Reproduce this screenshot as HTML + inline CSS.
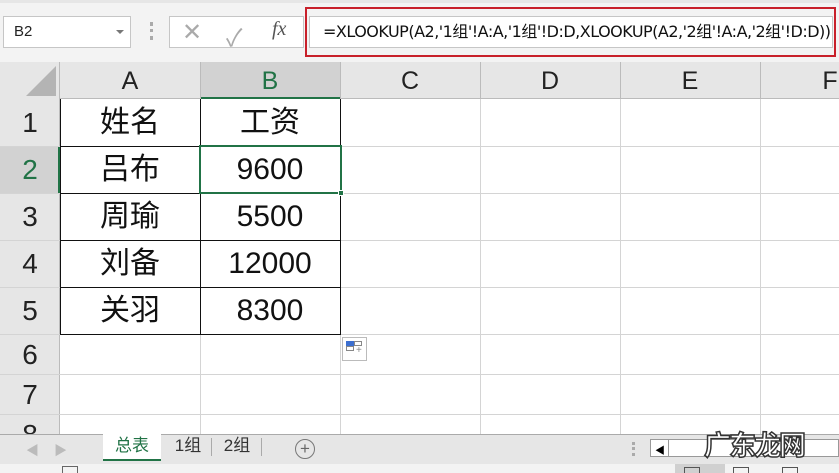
<!DOCTYPE html>
<html><head><meta charset="utf-8"><style>
*{margin:0;padding:0;box-sizing:border-box}
body{width:839px;height:473px;overflow:hidden;background:#fff;position:relative;font-family:"Liberation Sans","Noto Sans CJK SC",sans-serif}
.a{position:absolute}
.hl{position:absolute;height:1px;background:#d4d4d4}
.vl{position:absolute;width:1px;background:#d4d4d4}
.ch{position:absolute;top:62px;height:37px;font-size:25px;color:#222;text-align:center;line-height:38px}
.rh{position:absolute;left:0;width:60px;font-size:28px;color:#222;text-align:center}
.c{position:absolute;width:140px;text-align:center;font-size:30px;color:#111}
</style></head><body>
<!-- toolbar -->
<div class="a" style="left:0;top:0;width:839px;height:62px;background:#f3f3f3;border-top:3px solid #e6e6e6"></div>
<div class="a" style="left:3px;top:16px;width:128px;height:32px;background:#fff;border:1px solid #c6c6c6;font-size:15px;line-height:30px;padding-left:10px;color:#222">B2</div>
<div class="a" style="left:116px;top:30px;width:0;height:0;border-left:4px solid transparent;border-right:4px solid transparent;border-top:4px solid #777"></div>
<div class="a" style="left:150px;top:22px;width:3px;height:18px;border-left:3px dotted #aaa"></div>
<div class="a" style="left:169px;top:16px;width:135px;height:32px;background:#fff;border:1px solid #c6c6c6"></div>
<div class="a" style="left:182px;top:18px;font-size:24px;color:#aaa">✕</div>
<div class="a" style="left:226px;top:18px;font-size:24px;color:#aaa">✓</div>
<div class="a" style="left:272px;top:18px;font-size:20px;color:#555;font-style:italic;font-family:'Liberation Serif',serif">fx</div>
<div class="a" style="left:305px;top:7px;width:531px;height:50px;border:2px solid #c8202a"></div>
<div class="a" style="left:309px;top:16px;width:524px;height:32px;background:#fff;border:1px solid #c6c6c6;font-size:16px;line-height:30px;padding-left:13px;color:#111;white-space:nowrap;font-family:'DejaVu Sans','Noto Sans CJK SC',sans-serif;letter-spacing:-0.5px;overflow:hidden">=XLOOKUP(A2,'1组'!A:A,'1组'!D:D,XLOOKUP(A2,'2组'!A:A,'2组'!D:D))</div>
<!-- headers -->
<div class="a" style="left:0;top:62px;width:839px;height:37px;background:#e6e6e6;border-bottom:1px solid #bbb"></div>
<div class="a" style="left:0;top:62px;width:60px;height:372px;background:#e6e6e6;border-right:1px solid #bbb"></div>
<div class="a" style="left:26px;top:66px;width:0;height:0;border-left:30px solid transparent;border-bottom:30px solid #b4b4b4"></div>
<div class="a" style="left:200px;top:62px;width:140px;height:37px;background:#d2d2d2;border-bottom:2px solid #217346"></div>
<div class="a" style="left:0;top:146px;width:60px;height:47px;background:#d2d2d2;border-right:2px solid #217346"></div>
<div class="ch" style="left:60px;width:140px">A</div>
<div class="ch" style="left:200px;width:140px;color:#217346">B</div>
<div class="ch" style="left:340px;width:140px">C</div>
<div class="ch" style="left:480px;width:140px">D</div>
<div class="ch" style="left:620px;width:140px">E</div>
<div class="ch" style="left:760px;width:140px">F</div>
<div class="vl" style="left:200px;top:62px;height:37px;background:#bbb"></div>
<div class="vl" style="left:340px;top:62px;height:37px;background:#bbb"></div>
<div class="vl" style="left:480px;top:62px;height:37px;background:#bbb"></div>
<div class="vl" style="left:620px;top:62px;height:37px;background:#bbb"></div>
<div class="vl" style="left:760px;top:62px;height:37px;background:#bbb"></div>
<!-- grid lines -->
<div class="vl" style="left:480px;top:99px;height:335px"></div>
<div class="vl" style="left:620px;top:99px;height:335px"></div>
<div class="vl" style="left:760px;top:99px;height:335px"></div>
<div class="vl" style="left:200px;top:334px;height:100px"></div>
<div class="vl" style="left:340px;top:334px;height:100px"></div>
<div class="hl" style="left:0;top:146px;width:839px"></div>
<div class="hl" style="left:0;top:193px;width:839px"></div>
<div class="hl" style="left:0;top:240px;width:839px"></div>
<div class="hl" style="left:0;top:287px;width:839px"></div>
<div class="hl" style="left:0;top:334px;width:839px"></div>
<div class="hl" style="left:0;top:374px;width:839px"></div>
<div class="hl" style="left:0;top:414px;width:839px"></div>
<!-- table borders -->
<div class="a" style="left:60px;top:99px;width:281px;height:236px;border:1px solid #111;border-top:none"></div>
<div class="a" style="left:200px;top:99px;width:1px;height:236px;background:#111"></div>
<div class="a" style="left:60px;top:146px;width:281px;height:1px;background:#111"></div>
<div class="a" style="left:60px;top:193px;width:281px;height:1px;background:#111"></div>
<div class="a" style="left:60px;top:240px;width:281px;height:1px;background:#111"></div>
<div class="a" style="left:60px;top:287px;width:281px;height:1px;background:#111"></div>
<div class="a" style="left:199px;top:145px;width:143px;height:49px;border:2px solid #217346"></div>
<div class="a" style="left:338px;top:190px;width:6px;height:6px;background:#217346;border:1px solid #fff"></div>
<!-- row numbers -->
<div class="rh" style="top:99px;height:47px;line-height:48px">1</div>
<div class="rh" style="top:146px;height:47px;line-height:48px;color:#217346">2</div>
<div class="rh" style="top:193px;height:47px;line-height:48px">3</div>
<div class="rh" style="top:240px;height:47px;line-height:48px">4</div>
<div class="rh" style="top:287px;height:47px;line-height:48px">5</div>
<div class="rh" style="top:334px;height:40px;line-height:42px">6</div>
<div class="rh" style="top:374px;height:40px;line-height:42px">7</div>
<div class="rh" style="top:414px;height:20px;line-height:42px;overflow:hidden">8</div>
<!-- cells -->
<div class="c" style="left:60px;top:99px;line-height:47px">姓名</div>
<div class="c" style="left:200px;top:99px;line-height:47px">工资</div>
<div class="c" style="left:60px;top:146px;line-height:47px">吕布</div>
<div class="c" style="left:200px;top:146px;line-height:47px">9600</div>
<div class="c" style="left:60px;top:193px;line-height:47px">周瑜</div>
<div class="c" style="left:200px;top:193px;line-height:47px">5500</div>
<div class="c" style="left:60px;top:240px;line-height:47px">刘备</div>
<div class="c" style="left:200px;top:240px;line-height:47px">12000</div>
<div class="c" style="left:60px;top:287px;line-height:47px">关羽</div>
<div class="c" style="left:200px;top:287px;line-height:47px">8300</div>
<!-- paste options icon -->
<div class="a" style="left:342px;top:337px;width:25px;height:24px;border:1px solid #bbb;background:#fff"></div>
<div class="a" style="left:346px;top:341px;width:8px;height:5px;background:#3c6fd0"></div>
<div class="a" style="left:354px;top:341px;width:8px;height:5px;border:1px solid #888"></div>
<div class="a" style="left:346px;top:346px;width:8px;height:5px;border:1px solid #888"></div>
<div class="a" style="left:356px;top:346px;font-size:10px;color:#888;line-height:10px">+</div>
<!-- tab bar -->
<div class="a" style="left:0;top:434px;width:839px;height:30px;background:#e6e6e6;border-top:1px solid #aaa"></div>
<div class="a" style="left:26px;top:440px;font-size:13px;color:#bbb">◀</div>
<div class="a" style="left:54px;top:440px;font-size:13px;color:#bbb">▶</div>
<div class="a" style="left:103px;top:434px;width:58px;height:27px;background:#fff;border-bottom:2px solid #217346;font-size:17px;color:#217346;text-align:center;line-height:24px">总表</div>
<div class="a" style="left:165px;top:434px;width:46px;font-size:17px;color:#333;text-align:center;line-height:24px">1组</div>
<div class="vl" style="left:211px;top:438px;height:18px;background:#aaa"></div>
<div class="a" style="left:214px;top:434px;width:46px;font-size:17px;color:#333;text-align:center;line-height:24px">2组</div>
<div class="vl" style="left:261px;top:438px;height:18px;background:#aaa"></div>
<div class="a" style="left:295px;top:439px;width:20px;height:20px;border:1px solid #777;border-radius:50%;font-size:17px;line-height:17px;text-align:center;color:#666">+</div>
<div class="a" style="left:632px;top:442px;width:3px;height:14px;border-left:3px dotted #aaa"></div>
<div class="a" style="left:650px;top:439px;width:189px;height:18px;background:#fff;border:1px solid #999"></div>
<div class="a" style="left:668px;top:439px;width:1px;height:18px;background:#999"></div>
<div class="a" style="left:655px;top:442px;font-size:10px;color:#000">◀</div>
<div class="a" style="left:704px;top:424px;font-size:27px;font-weight:bold;color:#fff;-webkit-text-stroke:1.5px #333;letter-spacing:-2px">广东龙网</div>
<!-- status bar -->
<div class="a" style="left:0;top:464px;width:839px;height:9px;background:#f3f3f3"></div>
<div class="a" style="left:675px;top:464px;width:50px;height:9px;background:#d0d0d0"></div>
<div class="a" style="left:62px;top:466px;width:16px;height:7px;border:1px solid #666;border-bottom:none"></div>
<div class="a" style="left:684px;top:467px;width:16px;height:6px;border:1px solid #555;border-bottom:none"></div>
<div class="a" style="left:733px;top:467px;width:16px;height:6px;border:1px solid #555;border-bottom:none"></div>
<div class="a" style="left:782px;top:467px;width:16px;height:6px;border:1px solid #555;border-bottom:none"></div>
</body></html>
